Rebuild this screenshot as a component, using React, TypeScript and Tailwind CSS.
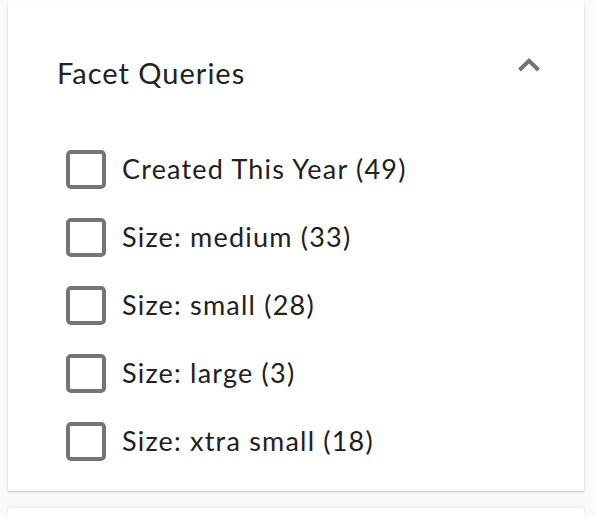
const facets = [
  { label: 'Created This Year', count: 49 },
  { label: 'Size: medium', count: 33 },
  { label: 'Size: small', count: 28 },
  { label: 'Size: large', count: 3 },
  { label: 'Size: xtra small', count: 18 },
];

function Chevron() {
  return (
    <svg width="26" height="16" viewBox="0 0 26 16" fill="none" className="mb-[16px]">
      <path d="M3.5 13 L13 3.8 L22.5 13" stroke="#757575" strokeWidth="4" />
    </svg>
  );
}

export default function App() {
  return (
    <div
      className="min-h-[516px] w-[596px] bg-[#fafafa] pl-2 pr-3"
      style={{ fontFamily: 'Lato, "Noto Sans", sans-serif' }}
    >
      <div className="h-[7px] bg-white shadow-[0_1px_3px_rgba(0,0,0,0.12)]" />
      <section className="bg-white shadow-[0_1px_3px_rgba(0,0,0,0.15),0_1px_1px_rgba(0,0,0,0.08)]">
        <div className="flex items-center justify-between pl-[49px] pr-[42px] pt-[48px] pb-[44px]">
          <h2 className="text-[29px] leading-[36px] tracking-[1px] text-[#212121]">Facet Queries</h2>
          <Chevron />
        </div>
        <ul className="flex flex-col pl-[58px] pb-[16px]">
          {facets.map((f) => (
            <li key={f.label} className="flex h-[68px] items-center">
              <span className="h-[39px] w-[40px] rounded-[5px] border-[4px] border-[#757575]" />
              <span className="ml-[16px] text-[27px] tracking-[1.2px] text-[#212121]">
                {f.label} ({f.count})
              </span>
            </li>
          ))}
        </ul>
      </section>
      <div className="mt-[17px] h-[20px] bg-white shadow-[0_-1px_3px_rgba(0,0,0,0.08)]" />
    </div>
  );
}
